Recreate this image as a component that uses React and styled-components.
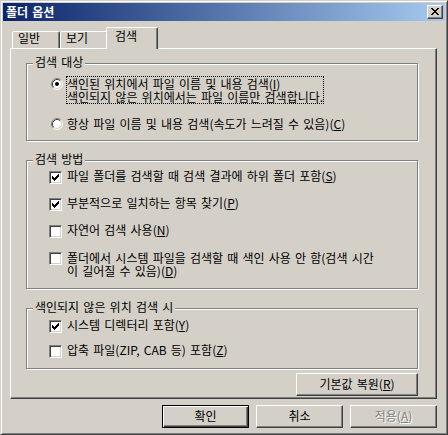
import React from 'react';
import styled, { createGlobalStyle, css } from 'styled-components';

const FONT = `"Noto Sans CJK KR", "Noto Sans", sans-serif`;

const Global = createGlobalStyle`
  html, body { margin: 0; padding: 0; background: #d4d0c8; }
  body { font-family: ${FONT}; font-size: 12px; color: #000; word-spacing: 1.5px; }
  * { box-sizing: border-box; }
`;

const Window = styled.div`
  width: 448px;
  height: 435px;
  border: 1px solid;
  border-color: #d4d0c8 #404040 #404040 #d4d0c8;
  box-shadow: inset 1px 1px #fff, inset -1px -1px #808080;
  padding: 2px;
  background: #d4d0c8;
  display: flex;
  flex-direction: column;
  overflow: hidden;
`;

const TitleBar = styled.div`
  height: 18px;
  flex: none;
  background: linear-gradient(to right, #0a246a, #a6caf0);
  display: flex;
  align-items: center;
  justify-content: space-between;
  padding: 0 2px 0 3px;
`;

const Title = styled.span`
  color: #fff;
  font-weight: 700;
  font-size: 12px;
  line-height: 12px;
`;

const CaptionButton = styled.div`
  width: 16px;
  height: 14px;
  background: #d4d0c8;
  border: 1px solid;
  border-color: #fff #404040 #404040 #fff;
  box-shadow: inset -1px -1px #808080;
  display: flex;
  align-items: center;
  justify-content: center;
  padding: 0 1px 1px 0;
`;

const Body = styled.div`
  flex: 1;
  display: flex;
  flex-direction: column;
  padding: 6px 8px 0 7px;
`;

const TabList = styled.div`
  display: flex;
  align-items: flex-end;
  height: 22px;
  padding-left: 2px;
  margin-bottom: -1px;
  flex: none;
`;

const Tab = styled.div`
  width: 48px;
  height: 17px;
  margin-bottom: 1px;
  border: 1px solid;
  border-bottom: none;
  border-color: #fff #404040 transparent #fff;
  box-shadow: inset -1px 0 #808080;
  border-radius: 2px 2px 0 0;
  padding: 0 0 0 5px;
  line-height: 12px;
  white-space: nowrap;
  background: #d4d0c8;
  ${p => p.$active && css`
    width: 52px;
    height: 22px;
    margin: 0 -2px;
    padding: 2px 0 0 8px;
    position: relative;
    z-index: 1;
  `}
`;

const Panel = styled.div`
  height: 351px;
  flex: none;
  border: 1px solid;
  border-color: #fff #404040 #404040 #fff;
  box-shadow: inset -1px -1px #808080;
  padding: 14px 18px 0 15px;
  display: flex;
  flex-direction: column;
`;

const Group = styled.div`
  position: relative;
  border: 1px solid #808080;
  box-shadow: inset 1px 1px #fff, 1px 1px #fff;
  padding: ${p => p.$pad};
  margin-top: ${p => p.$mt || 0}px;
  display: flex;
  flex-direction: column;
  align-items: flex-start;
  gap: ${p => p.$gap}px;
`;

const Legend = styled.span`
  position: absolute;
  top: -8px;
  left: 6px;
  padding: 0 2px;
  background: #d4d0c8;
  line-height: 12px;
  white-space: nowrap;
`;

const OptionRow = styled.div`
  display: flex;
  align-items: flex-start;
`;

const OptionText = styled.span`
  border: 1px solid transparent;
  ${p => p.$focused && css`border: 1px dotted #000;`}
  line-height: ${p => p.$lh}px;
  white-space: nowrap;
`;

const RadioBox = styled.span`
  width: 12px;
  height: 12px;
  flex: none;
  margin: 2px 3px 0 2px;
  display: block;
  svg { display: block; }
`;

const CheckBox = styled.span`
  width: 13px;
  height: 13px;
  flex: none;
  margin: 2px 4px 0 0;
  background: #fff;
  border: 1px solid;
  border-color: #808080 #fff #fff #808080;
  box-shadow: inset 1px 1px #404040, inset -1px -1px #d4d0c8;
  display: flex;
  padding: 2px 0 0 2px;
  svg { display: block; }
`;

const Button = styled.button`
  width: ${p => p.$w}px;
  height: 23px;
  flex: none;
  font-family: ${FONT};
  font-size: 12px;
  word-spacing: 1.5px;
  line-height: 12px;
  color: #000;
  background: #d4d0c8;
  border: 1px solid;
  border-color: #fff #404040 #404040 #fff;
  box-shadow: inset -1px -1px #808080;
  padding: 0 0 2px 0;
  margin: 0;
  cursor: default;
  ${p => p.$default && css`
    border-color: #000;
    box-shadow: inset 1px 1px #fff, inset -1px -1px #404040, inset -2px -2px #808080;
  `}
  ${p => p.disabled && css`
    color: #808080;
    text-shadow: 1px 1px #fff;
  `}
`;

const RestoreButton = styled(Button)`
  align-self: flex-end;
  margin-top: 4px;
`;

const ButtonRow = styled.div`
  display: flex;
  justify-content: flex-end;
  gap: 7px;
  margin-top: 6px;
`;

const CloseGlyph = () => (
  <svg width="8" height="7" viewBox="0 0 8 7" shapeRendering="crispEdges">
    <path
      fill="#000"
      d="M0 0h2v1H0zM6 0h2v1H6zM1 1h2v1H1zM5 1h2v1H5zM2 2h4v1H2zM3 3h2v1H3zM2 4h4v1H2zM1 5h2v1H1zM5 5h2v1H5zM0 6h2v1H0zM6 6h2v1H6z"
    />
  </svg>
);

const RadioIcon = ({ checked }) => (
  <svg width="12" height="12" viewBox="0 0 12 12">
    <circle cx="6" cy="6" r="4.5" fill="#fff" />
    <path d="M2.11 9.89 A5.5 5.5 0 0 1 9.89 2.11" fill="none" stroke="#808080" />
    <path d="M2.82 9.18 A4.5 4.5 0 0 1 9.18 2.82" fill="none" stroke="#404040" />
    <path d="M9.89 2.11 A5.5 5.5 0 0 1 2.11 9.89" fill="none" stroke="#fff" />
    <path d="M9.18 2.82 A4.5 4.5 0 0 1 2.82 9.18" fill="none" stroke="#d4d0c8" />
    {checked && <circle cx="6" cy="6" r="2" fill="#000" />}
  </svg>
);

const CheckIcon = () => (
  <svg width="7" height="7" viewBox="0 0 7 7" shapeRendering="crispEdges">
    <path
      fill="#000"
      d="M0 2h1v3H0zM1 3h1v3H1zM2 4h1v3H2zM3 3h1v3H3zM4 2h1v3H4zM5 1h1v3H5zM6 0h1v3H6z"
    />
  </svg>
);

const Radio = ({ checked, focused, children }) => (
  <OptionRow>
    <RadioBox><RadioIcon checked={checked} /></RadioBox>
    <OptionText $focused={focused} $lh={13}>{children}</OptionText>
  </OptionRow>
);

const Check = ({ checked, lh = 12, children }) => (
  <OptionRow>
    <CheckBox>{checked && <CheckIcon />}</CheckBox>
    <OptionText $lh={lh}>{children}</OptionText>
  </OptionRow>
);

export default function App() {
  return (
    <>
      <Global />
      <Window>
        <TitleBar>
          <Title>폴더 옵션</Title>
          <CaptionButton><CloseGlyph /></CaptionButton>
        </TitleBar>
        <Body>
          <TabList>
            <Tab>일반</Tab>
            <Tab>보기</Tab>
            <Tab $active>검색</Tab>
          </TabList>
          <Panel>
            <Group $pad="12px 0 9px 22px" $gap={12}>
              <Legend>검색 대상</Legend>
              <Radio checked focused>
                색인된 위치에서 파일 이름 및 내용 검색(<u>I</u>)<br />
                색인되지 않은 위치에서는 파일 이름만 검색합니다.
              </Radio>
              <Radio>항상 파일 이름 및 내용 검색(속도가 느려질 수 있음)(<u>C</u>)</Radio>
            </Group>
            <Group $pad="8px 0 10px 22px" $gap={12} $mt={19}>
              <Legend>검색 방법</Legend>
              <Check checked>파일 폴더를 검색할 때 검색 결과에 하위 폴더 포함(<u>S</u>)</Check>
              <Check checked>부분적으로 일치하는 항목 찾기(<u>P</u>)</Check>
              <Check>자연어 검색 사용(<u>N</u>)</Check>
              <Check lh={13}>
                폴더에서 시스템 파일을 검색할 때 색인 사용 안 함(검색 시간<br />
                이 길어질 수 있음)(<u>D</u>)
              </Check>
            </Group>
            <Group $pad="9px 0 10px 22px" $gap={10} $mt={19}>
              <Legend>색인되지 않은 위치 검색 시</Legend>
              <Check checked>시스템 디렉터리 포함(<u>Y</u>)</Check>
              <Check>압축 파일(ZIP, CAB 등) 포함(<u>Z</u>)</Check>
            </Group>
            <RestoreButton $w={122}>기본값 복원(<u>R</u>)</RestoreButton>
          </Panel>
          <ButtonRow>
            <Button $w={87} $default>확인</Button>
            <Button $w={87}>취소</Button>
            <Button $w={87} disabled>적용(<u>A</u>)</Button>
          </ButtonRow>
        </Body>
      </Window>
    </>
  );
}
